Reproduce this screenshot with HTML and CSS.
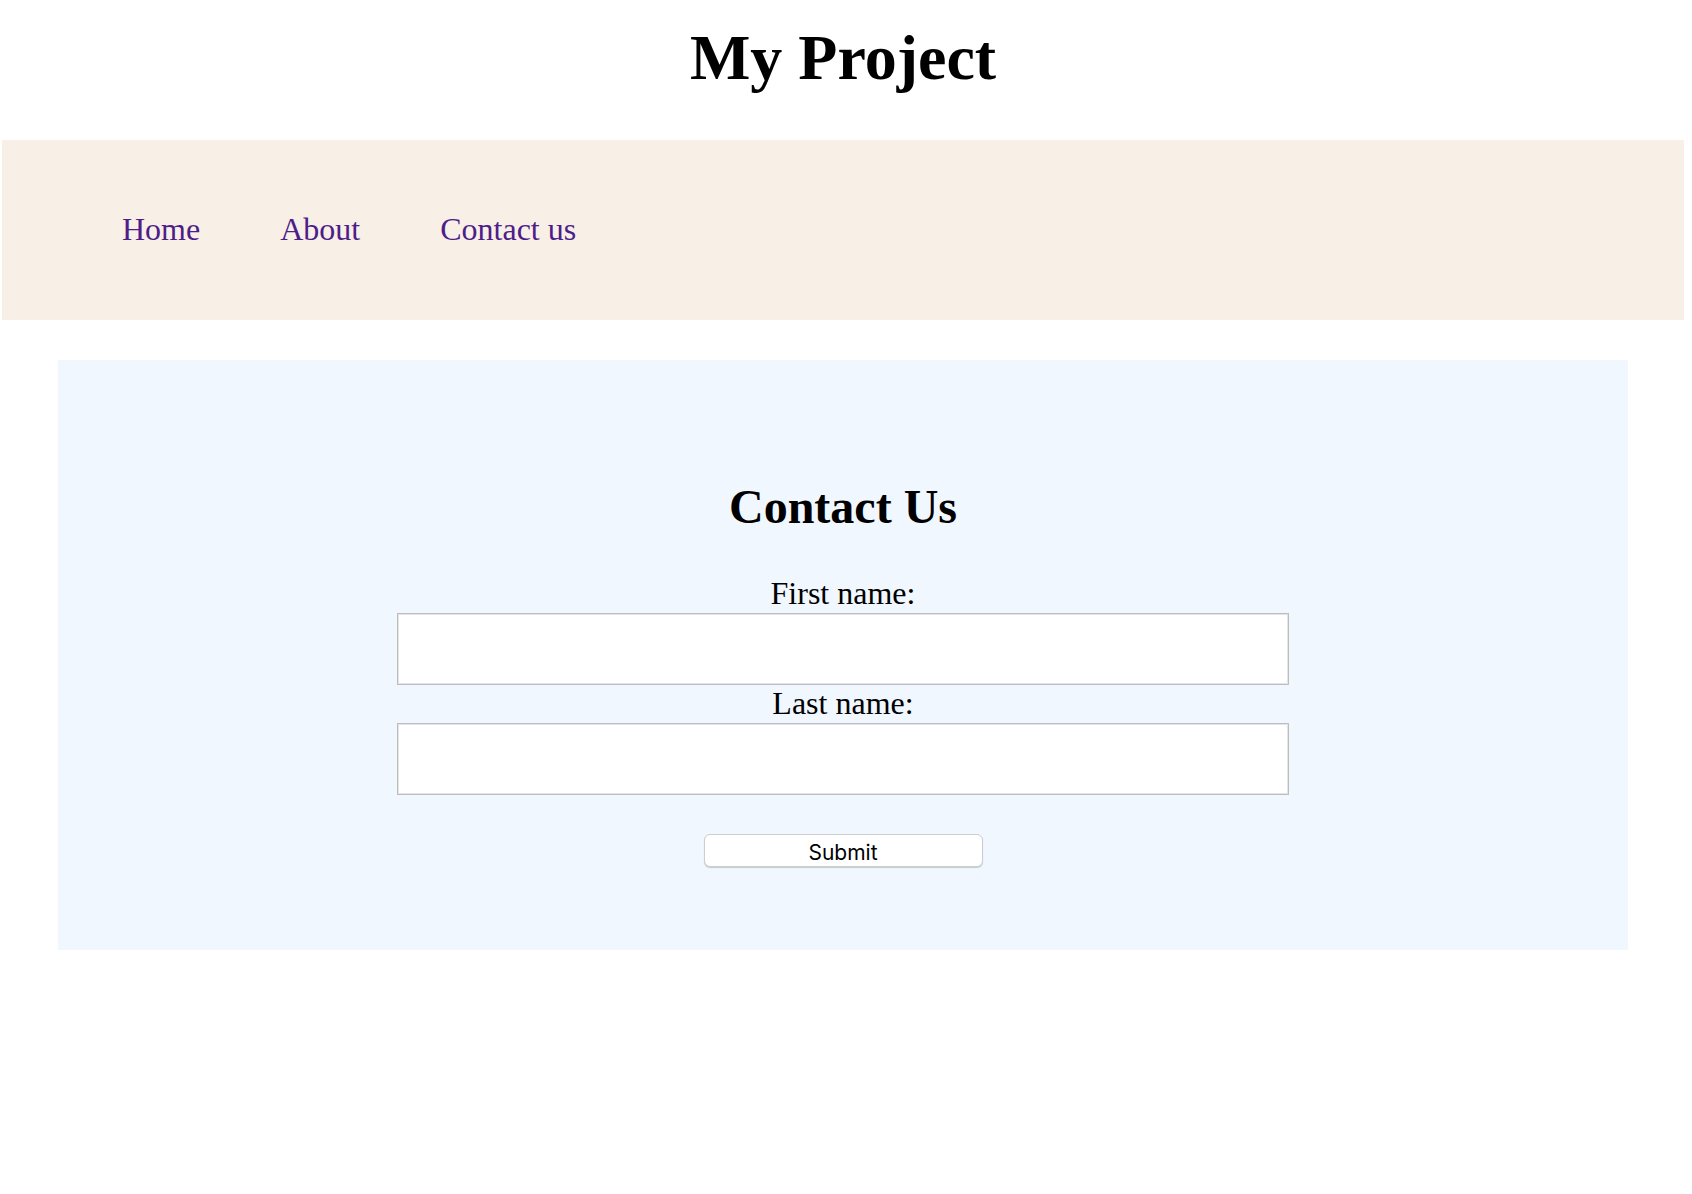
FILE: index.html
```html
<!DOCTYPE html>
<html lang="en">
<head>
<meta charset="utf-8">
<title>My Project</title>
<link rel="stylesheet" href="styles.css">
</head>
<body>
<div class="page">
  <header class="site-header">
    <h1 class="site-title">My Project</h1>
  </header>
  <nav class="site-nav">
    <a class="nav-link" href="#">Home</a>
    <a class="nav-link" href="#">About</a>
    <a class="nav-link" href="#">Contact us</a>
  </nav>
  <main class="contact">
    <h2 class="contact-title">Contact Us</h2>
    <form class="contact-form">
      <label class="field-label" for="fname">First name:</label>
      <input class="field-input" type="text" id="fname" name="fname">
      <label class="field-label" for="lname">Last name:</label>
      <input class="field-input" type="text" id="lname" name="lname">
      <button class="submit-btn" type="button">Submit</button>
    </form>
  </main>
</div>
</body>
</html>
```
FILE: styles.css
```css
html, body {
  margin: 0;
  padding: 0;
  background: #ffffff;
}

body {
  font-family: "Liberation Serif", "Times New Roman", serif;
  color: #000000;
}

.page {
  width: 1682px;
  margin-left: 2px;
  display: flex;
  flex-direction: column;
}

.site-title {
  margin: 21px 0 45px;
  font-size: 64px;
  line-height: 74px;
  font-weight: bold;
  text-align: center;
}

.site-nav {
  height: 180px;
  box-sizing: border-box;
  padding: 71px 0 73px 120px;
  background: #f8efe6;
  display: flex;
  gap: 80px;
}

.nav-link {
  font-size: 32px;
  line-height: 36px;
  color: #4e1d8a;
  text-decoration: none;
}

.contact {
  margin: 40px 56px 0;
  height: 590px;
  box-sizing: border-box;
  padding: 119px 0 0;
  background: #f0f7fe;
}

.contact-title {
  margin: 0 0 40px;
  font-size: 48px;
  line-height: 56px;
  font-weight: bold;
  text-align: center;
}

.contact-form {
  display: flex;
  flex-direction: column;
  align-items: center;
}

.field-label {
  display: block;
  font-size: 32px;
  line-height: 36px;
  padding-bottom: 2px;
  text-align: center;
}

.field-input {
  width: 892px;
  height: 72px;
  box-sizing: border-box;
  margin: 0;
  border: 1px solid #bdbdbd;
  box-shadow: inset 0 0 0 1px #e4e4e4;
  background: #ffffff;
  font-size: 20px;
}

.submit-btn {
  margin-top: 39px;
  width: 279px;
  height: 33px;
  box-sizing: border-box;
  border: 1px solid #cdcdcd;
  border-radius: 6px;
  background: #ffffff;
  box-shadow: 0 1px 1px rgba(0, 0, 0, 0.18);
  font-family: Inter, "Liberation Sans", sans-serif;
  font-size: 21px;
  line-height: 27px;
  padding: 4px 0 0;
  color: #000000;
}
```
